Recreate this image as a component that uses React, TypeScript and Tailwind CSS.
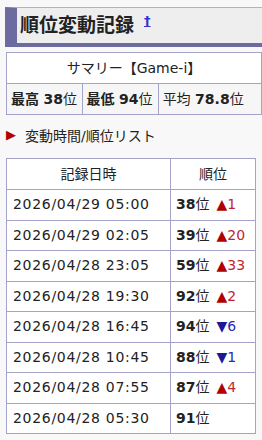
import React from 'react';

const rows = [
  { time: '2026/04/29 05:00', rank: 38, dir: 'up', diff: 1 },
  { time: '2026/04/29 02:05', rank: 39, dir: 'up', diff: 20 },
  { time: '2026/04/28 23:05', rank: 59, dir: 'up', diff: 33 },
  { time: '2026/04/28 19:30', rank: 92, dir: 'up', diff: 2 },
  { time: '2026/04/28 16:45', rank: 94, dir: 'down', diff: 6 },
  { time: '2026/04/28 10:45', rank: 88, dir: 'down', diff: 1 },
  { time: '2026/04/28 07:55', rank: 87, dir: 'up', diff: 4 },
  { time: '2026/04/28 05:30', rank: 91, dir: null, diff: 0 },
];

export default function App() {
  return (
    <div className="w-[262px] h-[440px] overflow-hidden bg-[#f8f8f8] text-[#222] font-['DejaVu_Sans','Noto_Sans_CJK_JP',sans-serif] pt-[7px]">
      {/* 見出し */}
      <div className="ml-[5px] w-[300px] h-[40px] bg-[#eeeeee] border-t border-t-[#b0b0d0] border-l-[12px] border-l-[#6b6b9f] border-b-4 border-b-[#6b6b9f] flex items-center pl-[3px]">
        <h2 className="text-[19px] font-bold text-[#222] leading-none">順位変動記録</h2>
        <a className="ml-[10px] -mt-[10px] text-[13px] font-bold text-[#3333cc] underline leading-none">†</a>
      </div>

      {/* サマリー */}
      <table className="mt-[5px] ml-[6px] border-collapse text-[14px]">
        <tbody>
          <tr className="h-[31px] bg-white">
            <td colSpan={3} className="border border-[#a4a4ca] text-center">サマリー【Game-i】</td>
          </tr>
          <tr className="h-[31px] bg-[#f6f6f6]">
            <td className="w-[80px] border border-[#a4a4ca] pl-[4px] whitespace-nowrap"><b>最高</b> <b>38</b>位</td>
            <td className="w-[81px] border border-[#a4a4ca] pl-[4px] whitespace-nowrap"><b>最低</b> <b>94</b>位</td>
            <td className="w-[120px] border border-[#a4a4ca] pl-[4px] whitespace-nowrap">平均 <b>78.8</b>位</td>
          </tr>
        </tbody>
      </table>

      {/* 変動リスト見出し */}
      <div className="h-[43px] flex items-center pl-[6px] text-[14px]">
        <span className="text-[#b00000] text-[13px] -mt-[5px] leading-none">▶</span>
        <span className="ml-[9px]">変動時間/順位リスト</span>
      </div>

      <table className="ml-[6px] border-collapse text-[14px] bg-white">
        <thead>
          <tr className="h-[31px]">
            <th className="w-[164px] border border-[#a4a4ca] font-normal text-center">記録日時</th>
            <th className="w-[85px] border border-[#a4a4ca] font-normal text-center">順位</th>
          </tr>
        </thead>
        <tbody>
          {rows.map((r, i) => (
            <tr key={i} className="h-[30.5px]">
              <td className="border border-[#a4a4ca] pl-[6px] tracking-[0.05em] whitespace-nowrap">{r.time}</td>
              <td className="border border-[#a4a4ca] pl-[5px] whitespace-nowrap">
                <b>{r.rank}</b>位
                {r.dir === 'up' && <span className="ml-[7px] text-[#c0262e]"><span className="text-[#b00000]">▲</span>{r.diff}</span>}
                {r.dir === 'down' && <span className="ml-[7px] text-[#2a2ab0]"><span className="text-[#1a1a99]">▼</span>{r.diff}</span>}
              </td>
            </tr>
          ))}
        </tbody>
      </table>
    </div>
  );
}
